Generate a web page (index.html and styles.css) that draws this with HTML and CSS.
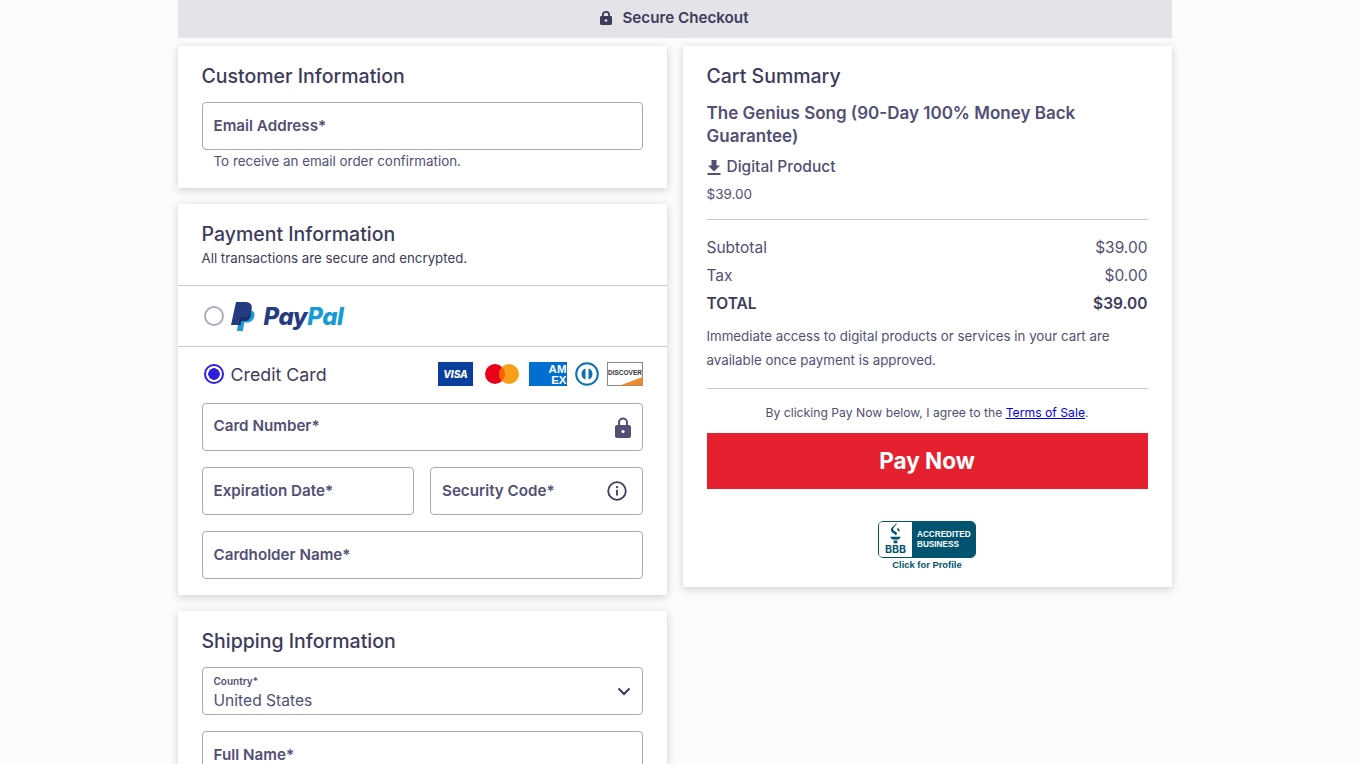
FILE: index.html
```html
<!DOCTYPE html>
<html lang="en">
<head>
  <meta charset="UTF-8" />
  <meta name="viewport" content="width=device-width, initial-scale=1.0" />
  <title>Secure Checkout</title>
  <link rel="stylesheet" href="styles.css">
</head>
<body>
  <div class="page">
    <header class="topbar">
      <svg viewBox="0 0 12 14" width="12" height="14"><path d="M2 5V3.800a4 3.800 0 0 1 8 0V5h.6c.8 0 1.400.6 1.400 1.400v6.200c0 .8-.6 1.400-1.400 1.400H1.400C.6 14 0 13.400 0 12.600V6.400C0 5.600.6 5 1.400 5zm1.800 0h4.400V3.800a2.200 2.100 0 0 0-4.400 0z" fill="#3d3b5c"/><circle cx="6" cy="9.500" r="1.300" fill="#e3e3e8"/></svg>
      <span>Secure Checkout</span>
    </header>

    <div class="columns">
      <div class="col">
        <section class="card">
          <h2>Customer Information</h2>
          <div class="field"><label>Email Address*</label></div>
          <p class="hint">To receive an email order confirmation.</p>
        </section>

        <section class="card card-payment">
          <div class="pay-head">
            <h2>Payment Information</h2>
            <p>All transactions are secure and encrypted.</p>
          </div>
          <div class="pay-row">
            <span class="radio"></span>
            <svg class="pp-mark" viewBox="0 0 24 29" width="24" height="29">
              <path d="M9 8h9c4 0 6 2.500 5.400 6-.7 4-3.700 6.500-7.700 6.500h-2.500L11.800 29H6z" fill="#169bd7"/>
              <path d="M5 0h9c5 0 7.500 2.600 6.700 7-.8 4.700-4.300 7.500-9 7.500H8.500L6.800 23H0z" fill="#253b80"/>
              <path d="M8.500 14.500h3.200c3.700 0 6.700-1.800 8.300-4.800.2 1.300.1 2.900-.4 4.300-.4 1.800-1.300 3.200-2.600 4.200-1.200.6-2.600.9-4.200.9h-2.500L9.600 23H6.800z" fill="#1f2a6b"/>
            </svg>
            <span class="pp-word"><b>Pay</b><i>Pal</i></span>
          </div>
          <div class="pay-card">
            <div class="cc-head">
              <span class="radio radio-on"></span>
              <span class="cc-title">Credit Card</span>
              <div class="cc-logos">
                <svg viewBox="0 0 35 24" width="35" height="24"><rect width="35" height="24" fill="#0a3f9e"/><text x="17.500" y="16" class="logo-visa">VISA</text></svg>
                <svg class="logo-mc" viewBox="0 0 34 20" width="34" height="20"><circle cx="10" cy="10" r="10" fill="#eb001b"/><circle cx="24" cy="10" r="10" fill="#f79e1b"/><path d="M17 2.800a10 10 0 0 1 0 14.400 10 10 0 0 1 0-14.400z" fill="#ff5f00"/></svg>
                <svg viewBox="0 0 38 24" width="38" height="24"><rect width="38" height="24" fill="#016fd0"/><text x="37.500" y="10.500" class="logo-amex">AM</text><text x="37.500" y="22" class="logo-amex">EX</text></svg>
                <svg viewBox="0 0 24 24" width="24" height="24"><circle cx="12" cy="12" r="10.800" fill="#fff" stroke="#0a6fb5" stroke-width="2"/><path d="M10.500 6.500v11a5.800 5.800 0 0 1 0-11zM13.500 6.500a5.800 5.800 0 0 1 0 11z" fill="#0a6fb5"/></svg>
                <svg viewBox="0 0 36 24" width="36" height="24"><rect x=".5" y=".5" width="35" height="23" fill="#fff" stroke="#8a8a8a"/><path d="M13 23.500 35.500 15v8.500z" fill="#f08a2c"/><text x="18" y="13" class="logo-disc">DISCOVER</text></svg>
              </div>
            </div>
            <div class="field field-icon">
              <label>Card Number*</label>
              <svg viewBox="0 0 16 21" width="16" height="21"><path d="M3 8V5.500a5 5 0 0 1 10 0V8h1c1.100 0 2 .9 2 2v9c0 1.100-.9 2-2 2H2c-1.100 0-2-.9-2-2v-9c0-1.100.9-2 2-2zm2 0h6V5.500a3 3 0 0 0-6 0z" fill="#524f75"/><circle cx="8" cy="14.500" r="1.600" fill="#fff"/></svg>
            </div>
            <div class="field-pair">
              <div class="field"><label>Expiration Date*</label></div>
              <div class="field field-icon field-code">
                <label>Security Code*</label>
                <svg viewBox="0 0 20 20" width="20" height="20"><circle cx="10" cy="10" r="8.800" fill="none" stroke="#3d3b5c" stroke-width="1.800"/><rect x="9.100" y="8.800" width="1.800" height="5.700" fill="#3d3b5c"/><circle cx="10" cy="6.200" r="1.100" fill="#3d3b5c"/></svg>
              </div>
            </div>
            <div class="field"><label>Cardholder Name*</label></div>
          </div>
        </section>

        <section class="card">
          <h2>Shipping Information</h2>
          <div class="field field-select">
            <div class="select-text">
              <small>Country*</small>
              <span>United States</span>
            </div>
            <svg viewBox="0 0 14 9" width="14" height="9"><path d="M1.500 1.500 7 7l5.500-5.500" fill="none" stroke="#3d3b5c" stroke-width="2"/></svg>
          </div>
          <div class="field"><label>Full Name*</label></div>
        </section>
      </div>

      <div class="col">
        <section class="card card-cart">
          <h2>Cart Summary</h2>
          <h3>The Genius Song (90-Day 100% Money Back Guarantee)</h3>
          <div class="product-type">
            <svg viewBox="0 0 14 15" width="14" height="15"><path d="M4.500 0h5v5.500H13L7 11.500 1 5.500h3.500zM.5 13h13v2H.5z" fill="#524f75"/></svg>
            <span>Digital Product</span>
          </div>
          <p class="price">$39.00</p>
          <hr>
          <div class="sum-row"><span>Subtotal</span><span>$39.00</span></div>
          <div class="sum-row"><span>Tax</span><span>$0.00</span></div>
          <div class="sum-row sum-total"><span>TOTAL</span><span>$39.00</span></div>
          <p class="note">Immediate access to digital products or services in your cart are available once payment is approved.</p>
          <hr>
          <p class="terms">By clicking Pay Now below, I agree to the <a href="#">Terms of Sale</a>.</p>
          <button class="pay-btn">Pay Now</button>
          <div class="bbb">
            <div class="bbb-badge">
              <div class="bbb-left">
                <svg viewBox="0 0 16 24" width="15" height="22"><path d="M9 0c1 2-3 4-3.500 6.500C5 9 9 9 9.500 11c.3 1.200-.5 2-1.500 2.500 0-1.500-4.500-2.500-5-5.500C2.500 5 7 3 9 0zM10 5c2 1.500 3 3 2.500 4.500L10 8zM2 15h12l-2.500 3h-7zM6 19h4v3H6z" fill="#00546f"/></svg>
                <b>BBB</b>
              </div>
              <div class="bbb-right">ACCREDITED<br>BUSINESS</div>
            </div>
            <div class="bbb-link">Click for Profile</div>
          </div>
        </section>
      </div>
    </div>
  </div>
</body>
</html>
```

FILE: styles.css
```css
* {
  box-sizing: border-box;
  margin: 0;
  padding: 0;
}

html, body {
  height: 764px;
  overflow: hidden;
}

body {
  font-family: "Inter", "Noto Sans", sans-serif;
  background-color: #fcfcfc;
  color: #3d3b5c;
  padding-right: 10px;
}

.page {
  width: 994px;
  margin: 0 auto;
}

.topbar {
  height: 38px;
  padding-bottom: 3px;
  background-color: #e3e3e8;
  display: flex;
  align-items: center;
  justify-content: center;
  gap: 10px;
  font-size: 15.200px;
  font-weight: 600;
}

.columns {
  display: flex;
  gap: 16px;
  margin-top: 8px;
  align-items: flex-start;
}

.col {
  width: 489px;
  display: flex;
  flex-direction: column;
  gap: 16px;
}

.card {
  background-color: #fff;
  padding: 17px 24px 17px;
  box-shadow: 0 2px 8px rgba(40, 40, 70, 0.22);
}

h2 {
  font-size: 19.500px;
  line-height: 26px;
  font-weight: 500;
  color: #3d3b5c;
}

.field {
  height: 48px;
  margin-top: 13px;
  padding: 0 11px;
  border: 1px solid #aaa8bb;
  border-radius: 4px;
  display: flex;
  align-items: center;
  background-color: #fff;
  font-size: 15.200px;
  font-weight: 600;
  color: #524f75;
}

.field label {
  margin-bottom: 2px;
}

.hint {
  margin: 2px 0 0 12px;
  font-size: 13.400px;
  line-height: 19px;
  color: #524f75;
}

.card-payment {
  padding: 0;
}

.pay-head {
  padding: 17px 24px 18px;
  border-bottom: 1px solid #c9c7d3;
}

.pay-head p {
  font-size: 13.300px;
  line-height: 18px;
  margin-top: 2px;
}

.pay-row {
  height: 61px;
  padding: 0 24px;
  display: flex;
  align-items: center;
  border-bottom: 1px solid #c9c7d3;
}

.radio {
  width: 20px;
  height: 20px;
  border: 2px solid #aeacbd;
  border-radius: 50%;
  flex: none;
  margin-left: 2px;
}

.radio-on {
  border-color: #2e1fe0;
  background: radial-gradient(circle, #2e1fe0 0 5.500px, #fff 6px);
}

.pp-mark {
  margin-left: 7px;
}

.pp-word {
  margin-left: 9px;
  font-size: 24px;
  font-style: italic;
  font-weight: 800;
  letter-spacing: -0.45px;
}

.pp-word b {
  font-weight: 800;
  color: #253b80;
}

.pp-word i {
  color: #179bd7;
}

.pay-card {
  padding: 15px 24px 16px;
}

.cc-head {
  display: flex;
  align-items: center;
  height: 24px;
}

.cc-title {
  margin-left: 7px;
  font-size: 17.800px;
}

.cc-logos {
  margin-left: auto;
  display: flex;
  align-items: center;
  gap: 8px;
}

.logo-mc {
  margin: 0 2px 0 4px;
}

.logo-visa {
  font: italic 800 10px "Inter", sans-serif;
  fill: #fff;
  text-anchor: middle;
}

.logo-amex {
  font: 900 11.500px "Liberation Sans", sans-serif;
  fill: #fff;
  text-anchor: end;
}

.logo-disc {
  font: 700 6.500px "Liberation Sans", sans-serif;
  fill: #333;
  text-anchor: middle;
}

.field-icon {
  justify-content: space-between;
}

.field-code {
  padding-right: 15px;
}

.cc-head + .field {
  margin-top: 17px;
}

.cc-head + .field label {
  margin-bottom: 4px;
}

.field-pair {
  display: grid;
  grid-template-columns: 1fr 1fr;
  gap: 16px;
  margin-top: 16px;
}

.field-pair .field {
  margin-top: 0;
}

.pay-card > .field:last-child {
  margin-top: 16px;
}

.field-select {
  justify-content: space-between;
}

.select-text {
  padding-top: 3px;
}

.field-select small {
  display: block;
  font-size: 10px;
  line-height: 12px;
  font-weight: 600;
}

.field-select span {
  display: block;
  margin-top: 4px;
  font-size: 15.600px;
  line-height: 20px;
  font-weight: 400;
}

.field-select + .field {
  margin-top: 16px;
}

.card-cart h3 {
  margin-top: 13px;
  font-size: 17px;
  line-height: 23px;
  font-weight: 600;
  color: #524f75;
}

.product-type {
  margin-top: 9px;
  display: flex;
  align-items: center;
  gap: 6px;
  font-size: 15.500px;
  line-height: 20px;
  font-weight: 500;
  color: #524f75;
}

.price {
  margin-top: 8px;
  font-size: 13.500px;
  line-height: 18px;
  color: #524f75;
}

hr {
  border: 0;
  border-top: 1px solid #c9c7d3;
  margin-top: 16px;
}

.sum-row {
  display: flex;
  justify-content: space-between;
  font-size: 15.500px;
  line-height: 28px;
  color: #524f75;
}

hr + .sum-row {
  margin-top: 14px;
}

.sum-total {
  font-weight: 600;
  color: #3d3b5c;
}

.note {
  margin-top: 6px;
  font-size: 13.300px;
  line-height: 24px;
  color: #524f75;
}

.terms {
  margin-top: 15px;
  text-align: center;
  font-size: 12.200px;
  line-height: 18px;
  color: #524f75;
}

.terms a {
  color: #0000ee;
}

.pay-btn {
  display: block;
  width: 100%;
  height: 56px;
  margin-top: 11px;
  padding-bottom: 2px;
  border: 0;
  background-color: #e52130;
  color: #fff;
  font-family: inherit;
  font-size: 22.500px;
  font-weight: 700;
}

.bbb {
  width: 98px;
  margin: 32px auto 0;
}

.bbb-badge {
  height: 37px;
  display: flex;
  border: 1px solid #00546f;
  border-radius: 5px;
  overflow: hidden;
}

.bbb-left {
  width: 33px;
  background-color: #fff;
  display: flex;
  flex-direction: column;
  align-items: center;
  color: #00546f;
  font-size: 10.500px;
  line-height: 9px;
  padding-top: 1px;
}

.bbb-right {
  flex: 1;
  background-color: #00546f;
  color: #fff;
  font-family: "Liberation Sans", sans-serif;
  font-size: 8.200px;
  font-weight: 700;
  line-height: 10px;
  padding: 8px 0 0 5px;
  white-space: nowrap;
}

.bbb-link {
  margin-top: 1px;
  text-align: center;
  font-family: "Liberation Sans", sans-serif;
  font-size: 9.400px;
  font-weight: 700;
  line-height: 11px;
  color: #00546f;
}
```
